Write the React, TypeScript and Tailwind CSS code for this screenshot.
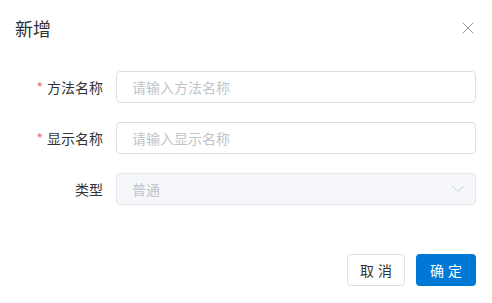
import { X, ChevronDown } from "lucide-react";

const fields = [
  { label: "方法名称", placeholder: "请输入方法名称", required: true },
  { label: "显示名称", placeholder: "请输入显示名称", required: true },
];

export default function App() {
  return (
    <div
      className="w-[492px] h-[303px] bg-white flex flex-col text-[14px]"
      style={{ fontFamily: '"Noto Sans CJK SC", "Noto Sans", sans-serif' }}
    >
      {/* Header */}
      <div className="flex items-center justify-between pl-[15px] pr-[14px] pt-[16px] h-[40px]">
        <h2 className="text-[18px] leading-[24px] text-[#303133]">新增</h2>
        <button className="w-[20px] h-[20px] flex items-center justify-center text-[#909399]">
          <X className="w-[20px] h-[20px]" strokeWidth={1.1} />
        </button>
      </div>

      {/* Form */}
      <div className="flex flex-col gap-[19px] pt-[31px] pr-[16px]">
        {fields.map((f) => (
          <div key={f.label} className="flex items-center h-[32px]">
            <label className="w-[116px] pr-[13px] text-right text-[#333333] leading-[32px]">
              {f.required && <span className="text-[#f56c6c] mr-[4px]">*</span>}
              {f.label}
            </label>
            <div className="flex-1 h-[32px] rounded-[4px] border border-[#dcdfe6] bg-white flex items-center px-[15px]">
              <span className="text-[#c0c4cc]">{f.placeholder}</span>
            </div>
          </div>
        ))}
        <div className="flex items-center h-[32px]">
          <label className="w-[116px] pr-[13px] text-right text-[#333333] leading-[32px]">类型</label>
          <div className="flex-1 h-[32px] rounded-[4px] border border-[#e4e7ed] bg-[#f5f7fa] flex items-center justify-between pl-[15px] pr-[7px]">
            <span className="text-[#c0c4cc]">普通</span>
            <ChevronDown className="w-[20px] h-[20px] text-[#c0c4cc]" strokeWidth={1.1} />
          </div>
        </div>
      </div>

      {/* Footer */}
      <div className="flex justify-end gap-[11px] pr-[16px] mt-[49px]">
        <button className="w-[58px] h-[32px] rounded-[4px] border border-[#dcdfe6] bg-white text-[#333333] tracking-[4px] pl-[4px]">
          取消
        </button>
        <button className="w-[60px] h-[32px] rounded-[4px] bg-[#0079d6] text-white tracking-[4px] pl-[4px]">
          确定
        </button>
      </div>
    </div>
  );
}
